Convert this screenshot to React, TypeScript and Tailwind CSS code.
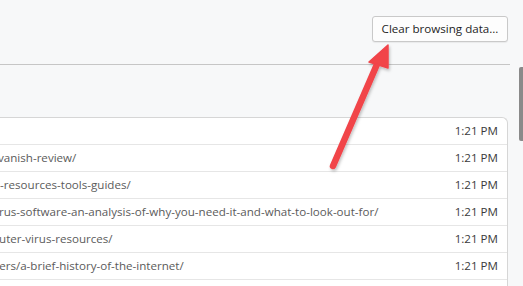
import type { ReactNode } from 'react'

const rows: { url: string; shift: number }[] = [
  { url: '', shift: 0 },
  { url: 'vanish-review/', shift: 1 },
  { url: 'n-resources-tools-guides/', shift: -4 },
  { url: 'irus-software-an-analysis-of-why-you-need-it-and-what-to-look-out-for/', shift: -1 },
  { url: 'puter-virus-resources/', shift: -5 },
  { url: 'ters/a-brief-history-of-the-internet/', shift: -2 },
  { url: '', shift: 0 },
]

function HistoryRow({ url, shift, children }: { url: string; shift: number; children?: ReactNode }) {
  return (
    <div className="flex h-[27px] items-center border-b border-[#e6e6e6] pr-[9px] overflow-hidden">
      <span className="flex-1 whitespace-nowrap overflow-hidden text-[#5b5b5b]" style={{ marginLeft: shift }}>
        {url}
      </span>
      {children}
    </div>
  )
}

function Arrow() {
  return (
    <svg className="absolute left-0 top-0 pointer-events-none" width="523" height="286" viewBox="0 0 523 286">
      <defs>
        <filter id="sh" x="-20%" y="-20%" width="140%" height="140%">
          <feDropShadow dx="1" dy="2" stdDeviation="1.5" floodColor="#000" floodOpacity="0.25" />
        </filter>
      </defs>
      <g filter="url(#sh)">
        <line x1="333" y1="166" x2="378" y2="62" stroke="#f1444a" strokeWidth="6.5" strokeLinecap="round" />
        <polygon points="388,45 369,62 388,68" fill="#f1444a" stroke="#f1444a" strokeWidth="1.5" strokeLinejoin="round" />
      </g>
    </svg>
  )
}

export default function App() {
  return (
    <div
      className="relative flex h-[286px] w-[523px] overflow-hidden bg-[#f7f8f9] text-[11.6px]"
      style={{ fontFamily: '"Open Sans", "Noto Sans", sans-serif' }}
    >
      <div className="flex w-[510px] flex-col">
        {/* Header */}
        <div className="flex h-[65px] shrink-0 items-start justify-end border-b border-[#c6c6c6] pr-[2px] pt-[16px]">
          <button
            type="button"
            className="flex h-[26px] w-[136px] items-center justify-center rounded-[3px] border border-[#c9c9c9] bg-[#fdfdfd] text-[#1e1e1e] shadow-[0_1px_1px_rgba(0,0,0,0.06)]"
          >
            Clear browsing data...
          </button>
        </div>

        {/* History list */}
        <div className="ml-[-4px] mr-[2px] mt-[52px] rounded-tr-[6px] border border-b-0 border-[#d6d6d6] bg-white">
          {rows.map((r, i) => (
            <HistoryRow key={i} url={r.url} shift={r.shift}>
              <span className="whitespace-nowrap text-[#3a3a3a]">1:21 PM</span>
            </HistoryRow>
          ))}
        </div>
      </div>

      {/* Scrollbar */}
      <div className="flex-1 pt-[67px] pl-[9px]">
        <div className="h-[74px] w-[4px] rounded-l-[2px] bg-[#8a8a8a]" />
      </div>

      <Arrow />
    </div>
  )
}
